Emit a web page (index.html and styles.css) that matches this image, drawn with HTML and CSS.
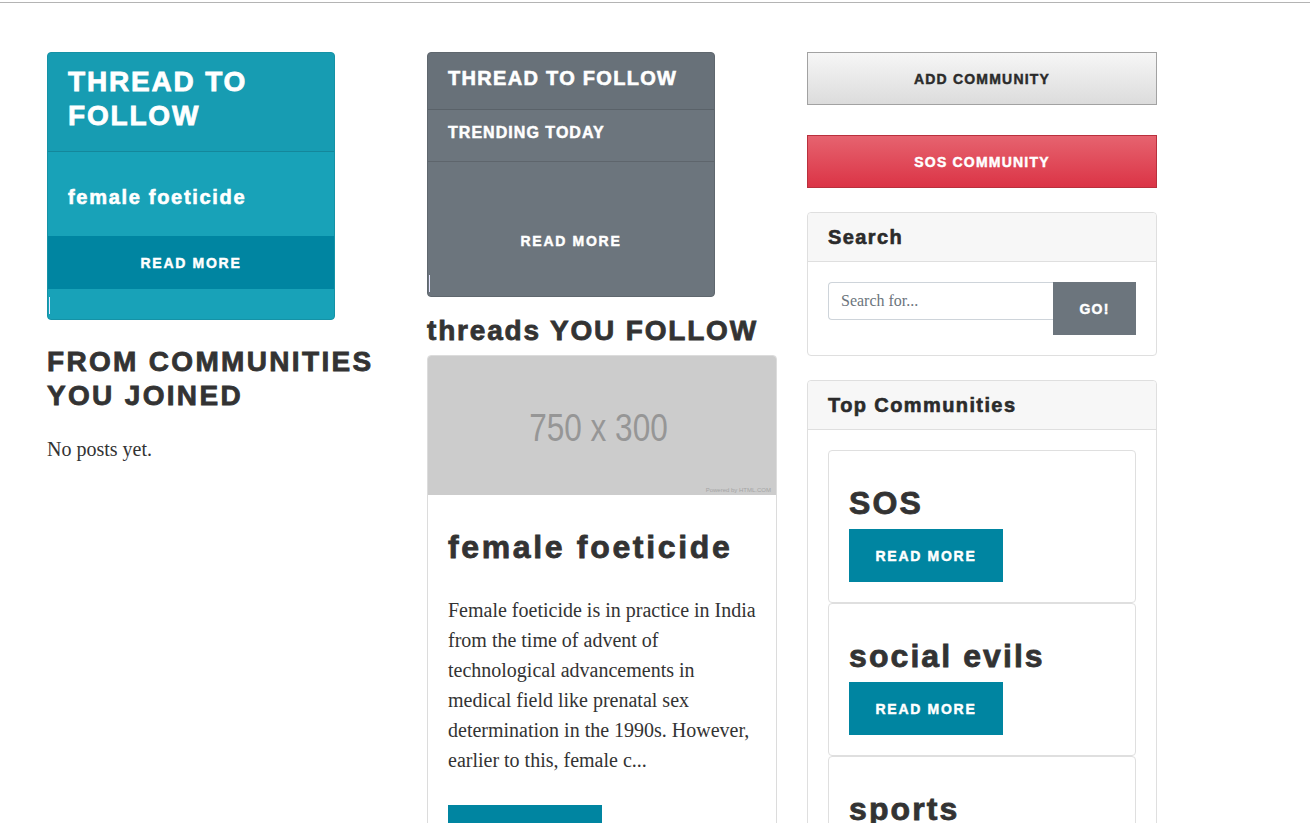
FILE: index.html
```html
<!DOCTYPE html>
<html lang="en">
<head>
<meta charset="utf-8">
<title>Communities</title>
<link rel="stylesheet" href="styles.css">
</head>
<body>
<div class="topline"></div>
<main class="page">
  <section class="col">
    <div class="tcard tcard-info">
      <div class="tcard-section tcard-header"><h2 class="tcard-big">THREAD TO FOLLOW</h2></div>
      <div class="tcard-body"><h5 class="tcard-title">female foeticide</h5></div>
      <a class="tcard-btn tcard-btn-info">READ MORE</a>
      <div class="tcard-foot"><span class="caret"></span></div>
    </div>
    <h2 class="sec-title sec-left">FROM COMMUNITIES YOU JOINED</h2>
    <p class="plain">No posts yet.</p>
  </section>

  <section class="col">
    <div class="tcard tcard-gray">
      <div class="tcard-section tcard-header"><h5 class="tcard-mid">THREAD TO FOLLOW</h5></div>
      <div class="tcard-section"><h6 class="tcard-small">TRENDING TODAY</h6></div>
      <div class="tcard-body empty"></div>
      <a class="tcard-btn tcard-btn-gray">READ MORE</a>
      <div class="tcard-foot short"><span class="caret"></span></div>
    </div>
    <h2 class="sec-title sec-mid">threads YOU FOLLOW</h2>
    <article class="post">
      <div class="ph">
        <span class="ph-text">750 x 300</span>
        <span class="ph-credit">Powered by HTML.COM</span>
      </div>
      <div class="post-body">
        <h2 class="post-title">female foeticide</h2>
        <p class="post-text">Female foeticide is in practice in India from the time of advent of technological advancements in medical field like prenatal sex determination in the 1990s. However, earlier to this, female c...</p>
        <a class="btn-teal">READ MORE</a>
      </div>
    </article>
  </section>

  <aside class="col">
    <a class="side-btn side-light">ADD COMMUNITY</a>
    <a class="side-btn side-red">SOS COMMUNITY</a>

    <div class="box">
      <div class="box-head"><h5>Search</h5></div>
      <div class="box-body">
        <div class="search">
          <input class="search-input" type="text" placeholder="Search for...">
          <button class="search-go" type="button">GO!</button>
        </div>
      </div>
    </div>

    <div class="box">
      <div class="box-head"><h5>Top Communities</h5></div>
      <div class="box-body">
        <div class="comm">
          <h2 class="comm-title">SOS</h2>
          <a class="btn-teal">READ MORE</a>
        </div>
        <div class="comm">
          <h2 class="comm-title">social evils</h2>
          <a class="btn-teal">READ MORE</a>
        </div>
        <div class="comm">
          <h2 class="comm-title">sports</h2>
          <a class="btn-teal">READ MORE</a>
        </div>
      </div>
    </div>
  </aside>
</main>
</body>
</html>
```

FILE: styles.css
```css
* { box-sizing: border-box; }

html, body {
  margin: 0;
  padding: 0;
  background: #ffffff;
}

body {
  font-family: "Liberation Serif", "Times New Roman", serif;
  font-size: 20px;
  color: #333333;
  height: 823px;
  overflow: hidden;
}

.topline {
  height: 3px;
  border-bottom: 1px solid #b4b4b4;
}

.page {
  display: grid;
  grid-template-columns: 350px 350px 350px;
  column-gap: 30px;
  padding: 49px 0 0 47px;
  align-items: start;
}

.col {
  display: flex;
  flex-direction: column;
  align-items: flex-start;
}

h2, h5, h6 {
  margin: 0;
  font-family: "Liberation Sans", Arial, sans-serif;
  font-weight: 700;
  letter-spacing: 0.065em;
  -webkit-text-stroke: 0.6px currentColor;
  line-height: 1.2;
}

/* thread cards */
.tcard {
  width: 288px;
  border-radius: 4px;
  color: #ffffff;
  display: flex;
  flex-direction: column;
  overflow: hidden;
}

.tcard-info {
  background: #18a2b8;
  border: 1px solid #1592a6;
}

.tcard-gray {
  background: #6c757d;
  border: 1px solid #5f676e;
}

.tcard-section {
  padding: 12px 20px;
  border-bottom: 1px solid rgba(0, 0, 0, 0.13);
}

.tcard-header {
  background: rgba(0, 0, 0, 0.03);
}

.tcard-big {
  font-size: 28px;
  margin-bottom: 7px;
  -webkit-text-stroke: 0.8px currentColor;
}

.tcard-mid {
  font-size: 20px;
  line-height: 26px;
  margin-bottom: 6px;
}

.tcard-small {
  font-size: 16px;
  line-height: 21px;
  margin-bottom: 6px;
  -webkit-text-stroke: 0.5px currentColor;
}

.tcard-body {
  padding: 33px 20px 27px;
}

.tcard-body.empty {
  padding: 26px 20px;
}

.tcard-title {
  font-size: 20px;
  letter-spacing: 0.085em;
}

.tcard-btn {
  height: 53px;
  display: flex;
  align-items: center;
  justify-content: center;
  font-family: "Liberation Sans", Arial, sans-serif;
  font-weight: 700;
  font-size: 14px;
  letter-spacing: 1.7px;
  -webkit-text-stroke: 0.45px currentColor;
  color: #ffffff;
}

.tcard-btn-info {
  background: #0085a1;
}

.tcard-btn-gray {
  background: #6c757d;
}

.tcard-foot {
  height: 30px;
  padding: 8px 0 0 1px;
}

.tcard-foot.short {
  height: 29px;
}

.caret {
  display: block;
  width: 1px;
  height: 17px;
  background: #e6e6ff;
}

/* section titles */
.sec-title {
  font-size: 28px;
  color: #333333;
  -webkit-text-stroke: 0.8px currentColor;
}

.sec-left {
  margin-top: 25px;
  margin-bottom: 22px;
  letter-spacing: 0.083em;
}

.sec-mid {
  margin-top: 17px;
  margin-bottom: 7px;
  white-space: nowrap;
}

.plain {
  margin: 0;
  line-height: 30px;
}

/* post card */
.post {
  width: 350px;
  border: 1px solid #dcdcdc;
  border-radius: 4px;
  overflow: hidden;
}

.ph {
  position: relative;
  height: 139px;
  background: #cccccc;
  display: flex;
  align-items: center;
  justify-content: center;
  padding-right: 8px;
}

.ph-text {
  display: inline-block;
  font-family: "Liberation Sans", Arial, sans-serif;
  font-size: 38px;
  color: #969696;
  padding-top: 6px;
  transform: scaleX(0.83);
}

.ph-credit {
  position: absolute;
  right: 5px;
  bottom: 2px;
  font-family: "Liberation Sans", Arial, sans-serif;
  font-size: 6px;
  color: #a5a5a5;
}

.post-body {
  padding: 33px 20px 0;
}

.post-title {
  font-size: 32px;
  margin-bottom: 28.6px;
  color: #333333;
  letter-spacing: 0.083em;
  -webkit-text-stroke: 0.8px currentColor;
}

.post-text {
  margin: 0 0 30px;
  font-size: 20px;
  line-height: 30px;
  color: #333333;
}

.btn-teal {
  display: flex;
  align-items: center;
  justify-content: center;
  width: 154px;
  height: 53px;
  background: #0085a1;
  color: #ffffff;
  font-family: "Liberation Sans", Arial, sans-serif;
  font-weight: 700;
  font-size: 14px;
  letter-spacing: 1.7px;
  -webkit-text-stroke: 0.45px currentColor;
}

/* sidebar */
.side-btn {
  width: 350px;
  height: 53px;
  display: flex;
  align-items: center;
  justify-content: center;
  font-family: "Liberation Sans", Arial, sans-serif;
  font-weight: 700;
  font-size: 14px;
  letter-spacing: 1.2px;
  -webkit-text-stroke: 0.45px currentColor;
}

.side-light {
  background: linear-gradient(#f6f6f6, #dcdcdc);
  border: 1px solid #a2a2a2;
  color: #2b2b2b;
  margin-bottom: 30px;
}

.side-red {
  background: linear-gradient(#e6636f, #db3446);
  border: 1px solid #b9303d;
  color: #ffffff;
  margin-bottom: 24px;
}

.box {
  width: 350px;
  border: 1px solid #dfdfdf;
  border-radius: 4px;
  margin-bottom: 24px;
  background: #ffffff;
}

.box-head {
  background: #f7f7f7;
  border-bottom: 1px solid #dfdfdf;
  padding: 12px 20px;
  border-radius: 4px 4px 0 0;
}

.box-head h5 {
  font-size: 20px;
  color: #2b2b2b;
  letter-spacing: 0.07em;
}

.box-body {
  padding: 20px;
}

.search {
  display: flex;
  align-items: flex-start;
}

.search-input {
  width: 225px;
  height: 38px;
  border: 1px solid #ced4da;
  border-right: 0;
  border-radius: 4px 0 0 4px;
  padding: 0 12px;
  font-family: "Liberation Serif", "Times New Roman", serif;
  font-size: 16px;
  color: #495057;
  outline: none;
}

.search-input::placeholder {
  color: #6c757d;
}

.search-go {
  width: 83px;
  height: 53px;
  border: 0;
  background: #6c757d;
  color: #ffffff;
  font-family: "Liberation Sans", Arial, sans-serif;
  font-weight: 700;
  font-size: 14px;
  letter-spacing: 1.2px;
  -webkit-text-stroke: 0.45px currentColor;
  padding: 0;
}

.comm {
  border: 1px solid #dfdfdf;
  border-radius: 4px;
  padding: 33px 20px 20px;
  height: 153px;
}

.comm-title {
  font-size: 32px;
  color: #333333;
  margin-bottom: 7px;
  -webkit-text-stroke: 0.8px currentColor;
}
```
